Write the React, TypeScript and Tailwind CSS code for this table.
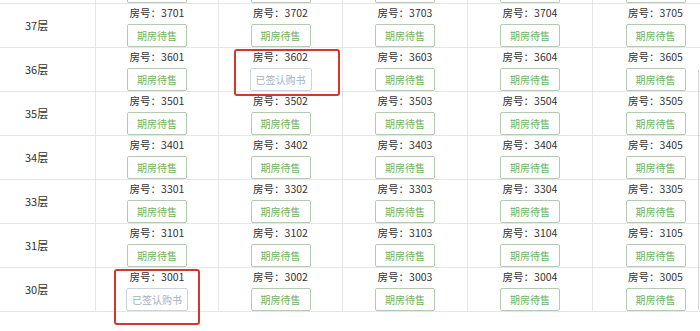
const FLOORS = [37, 36, 35, 34, 33, 31, 30];
const SIGNED = ["3602", "3001"];
const COLS = [1, 2, 3, 4, 5];

// red marks drawn over the table, relative to the room cell
const MARKS: Record<string, string> = {
  "3602": "left-[15px] top-[1px] w-[106px] h-[47px]",
  "3001": "left-[18px] top-[1px] w-[86px] h-[56px]",
};

function Room({ no }: { no: string }) {
  const signed = SIGNED.includes(no);
  return (
    <div className="relative flex flex-col items-center border-l border-[#e6e6e6]">
      <div className="h-[17px] leading-[17px] text-[10.5px] text-[#333]">房号：{no}</div>
      {signed ? (
        <div className="mt-[3px] h-[23px] w-[62px] flex items-center justify-center border border-[#c9d6e0] rounded-[2px] text-[10px] text-[#9fb3c8] bg-white">
          已签认购书
        </div>
      ) : (
        <div className="mt-[3px] h-[23px] w-[60px] flex items-center justify-center border border-[#b3cbb0] rounded-[2px] text-[10px] text-[#6cb35f] bg-white">
          期房待售
        </div>
      )}
      {MARKS[no] && (
        <div className={`absolute z-10 border-2 border-[#d2382f] rounded-[3px] ${MARKS[no]}`} />
      )}
    </div>
  );
}

export default function App() {
  return (
    <div
      className="relative w-[700px] h-[331px] overflow-hidden bg-white"
      style={{ fontFamily: '"Microsoft YaHei", "Noto Sans CJK SC", sans-serif' }}
    >
      <div className="w-[718px]">
        {/* tail of the 38th floor row, scrolled off the top */}
        <div className="grid grid-cols-[95px_123px_124px_125px_125px_126px] h-[4px] border-b border-[#e6e6e6]">
          <div />
          {COLS.map((c) => (
            <div key={c} className="flex justify-center border-l border-[#e6e6e6]">
              <div className="w-[60px] h-[3px] border-x border-b border-[#b3cbb0] rounded-b-[2px]" />
            </div>
          ))}
        </div>
        {FLOORS.map((f) => (
          <div
            key={f}
            className="grid grid-cols-[95px_123px_124px_125px_125px_126px] h-[44px] border-b border-[#e6e6e6]"
          >
            <div className="flex items-center pl-[25px] text-[11px] text-[#333]">{f}层</div>
            {COLS.map((c) => (
              <Room key={c} no={`${f}0${c}`} />
            ))}
          </div>
        ))}
      </div>
      {/* scrollbar edge */}
      <div className="absolute left-[698px] top-[70px] w-px h-[240px] bg-[#d4d4d4]" />
    </div>
  );
}
